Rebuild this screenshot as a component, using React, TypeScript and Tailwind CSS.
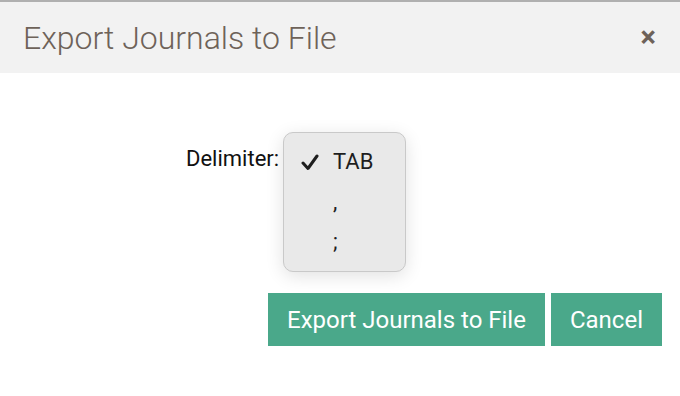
import React from 'react';

const delimiters = ['TAB', ',', ';'];

function CheckMark() {
  return (
    <svg width="18" height="17" viewBox="0 0 18 17" className="text-[#1e1e1e]">
      <path d="M2 9 L7 14.5 L16 2" fill="none" stroke="currentColor" strokeWidth="3" strokeLinecap="round" strokeLinejoin="round" />
    </svg>
  );
}

export default function App() {
  return (
    <div className="w-[680px] h-[396px] bg-white font-['Roboto',sans-serif] overflow-hidden">
      {/* header */}
      <div className="border-t-2 border-[#b0b0b0] bg-[#f2f2f2] h-[73px] flex items-center justify-between pl-[23px] pr-[24px]">
        <h1 className="text-[32px] font-light text-[#6e6259] leading-none">Export Journals to File</h1>
        <span className="text-[29px] font-bold text-[#6e6259] leading-none">×</span>
      </div>

      {/* body */}
      <div className="pt-[59px]">
        <div className="flex items-start pl-[186px]">
          <label className="text-[22px] text-[#111] leading-[26px] mt-[14px] mr-[4px]">Delimiter:</label>
          <div className="w-[123px] h-[140px] rounded-[10px] bg-[#e9e9e9] border border-[#c9c9c9] shadow-[0_4px_18px_rgba(0,0,0,0.12)] py-[9px]">
            {delimiters.map((d, i) => (
              <div key={d} className="h-[40px] flex items-center">
                <div className="w-[49px] flex justify-end pr-[14px]">{i === 0 && <CheckMark />}</div>
                <span className="text-[22px] text-[#1e1e1e] leading-none">{d}</span>
              </div>
            ))}
          </div>
        </div>

        <div className="flex justify-end gap-[6px] pr-[18px] mt-[21px]">
          <button className="h-[53px] px-[19px] bg-[#4aa88a] text-white text-[24px] leading-none">Export Journals to File</button>
          <button className="h-[53px] px-[19px] bg-[#4aa88a] text-white text-[24px] leading-none">Cancel</button>
        </div>
      </div>
    </div>
  );
}
